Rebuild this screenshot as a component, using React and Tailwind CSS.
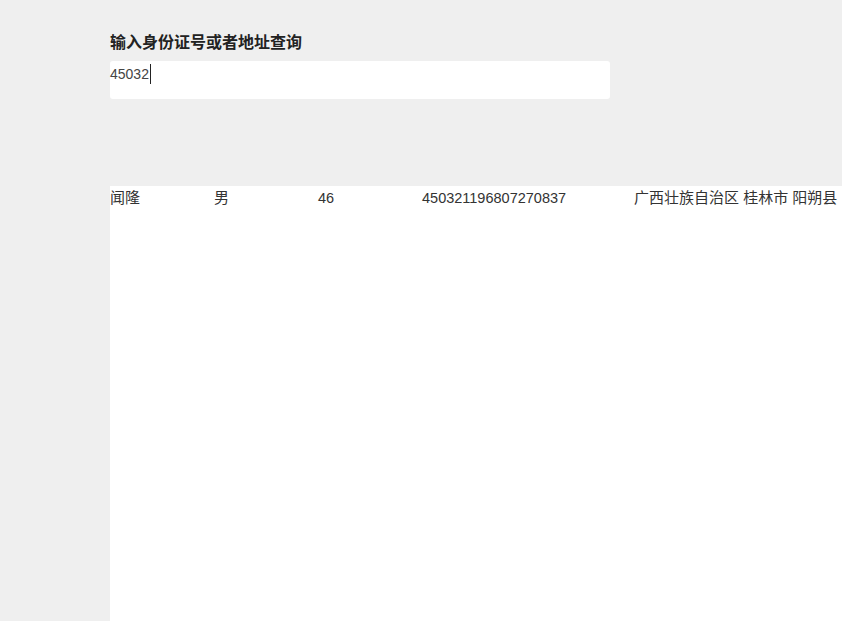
import { useState } from 'react'

const ROWS = [
  { name: '闻隆', sex: '男', age: '46', id: '450321196807270837', addr: '广西壮族自治区 桂林市 阳朔县' },
]

export default function App() {
  const [query] = useState('45032')

  return (
    <div className="h-[621px] overflow-hidden bg-[#efefef] pl-[110px] flex flex-col"
      style={{ fontFamily: '"Liberation Sans", Arial, "Noto Sans CJK SC", sans-serif' }}>
      <div className="pt-[33px] text-[16px] font-bold text-[#222] leading-[20px]">输入身份证号或者地址查询</div>
      <div className="mt-[8px] w-[500px] h-[38px] bg-white rounded-[3px] pt-[3px]">
        <div className="flex items-start text-[14px] text-[#444] leading-[20px]">
          {query}
          <span className="ml-px w-px h-[20px] bg-[#222]" />
        </div>
      </div>
      <div className="mt-[87px] flex-1 bg-white">
        {ROWS.map(r => (
          <div key={r.id} className="flex whitespace-nowrap text-[15px] text-[#333] leading-[24px]">
            <div className="w-[104px] shrink-0">{r.name}</div>
            <div className="w-[104px] shrink-0">{r.sex}</div>
            <div className="w-[104px] shrink-0 text-[14.5px]">{r.age}</div>
            <div className="w-[212px] shrink-0 text-[14.5px]">{r.id}</div>
            <div className="shrink-0">{r.addr}</div>
          </div>
        ))}
      </div>
    </div>
  )
}
